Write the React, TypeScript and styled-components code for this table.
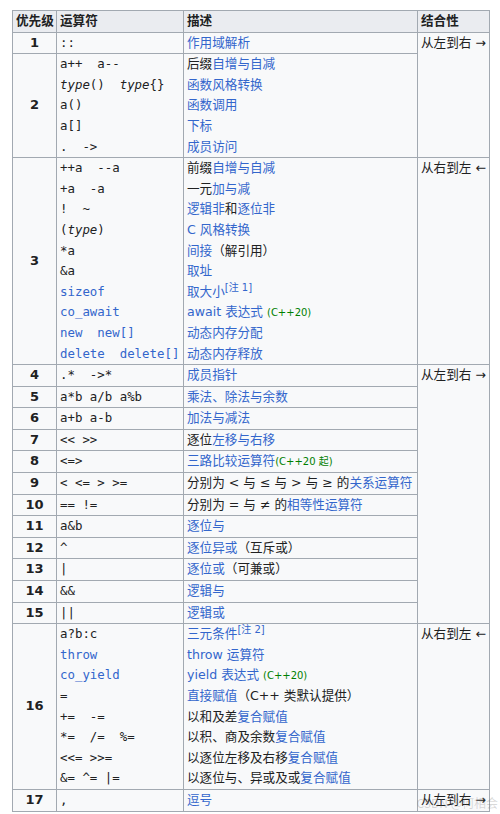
import React from "react";
import styled, { createGlobalStyle } from "styled-components";

const GlobalStyle = createGlobalStyle`
  html, body {
    margin: 0;
    padding: 0;
    background: #ffffff;
  }
  body {
    font-family: "DejaVu Sans", "Noto Sans CJK SC", sans-serif;
    color: #202122;
  }
`;

const Page = styled.div`
  position: relative;
  width: 500px;
  height: 814px;
  padding: 10px 0 0 12px;
  box-sizing: border-box;
  overflow: hidden;
`;

const Table = styled.table`
  border-collapse: collapse;
  table-layout: fixed;
  width: 477px;
  font-size: 12.6px;
  line-height: 20.6px;
  background: #f8f9fa;
  color: #202122;
`;

const HeadCell = styled.th`
  border: 1px solid #a2a9b1;
  background: #eaecf0;
  padding: 0 3px;
  text-align: left;
  font-weight: bold;
  white-space: nowrap;
`;

const Prec = styled.th`
  border: 1px solid #a2a9b1;
  padding: 0 3px;
  text-align: center;
  vertical-align: middle;
  font-weight: bold;
  font-size: 13px;
`;

const Cell = styled.td<{ $top?: boolean }>`
  border: 1px solid #a2a9b1;
  padding: 0 3px;
  vertical-align: ${(p) => (p.$top ? "top" : "middle")};
  white-space: nowrap;
  overflow: hidden;
`;

const Line = styled.div`
  height: 20.6px;
`;

const Code = styled.span<{ $link?: boolean }>`
  font-family: "DejaVu Sans Mono", monospace;
  font-size: 12.4px;
  color: ${(p) => (p.$link ? "#3366cc" : "#202122")};
  white-space: pre;
`;

const Type = styled.i`
  font-family: "DejaVu Sans Mono", monospace;
`;

const Link = styled.span`
  color: #3366cc;
`;

const Note = styled.span`
  color: #008000;
  font-size: 10px;
  line-height: 1;
`;

const Sup = styled.sup`
  color: #3366cc;
  font-size: 10px;
  line-height: 1;
  vertical-align: 5px;
`;

const Assoc = styled.span`
  white-space: nowrap;
`;

const Watermark = styled.span`
  position: absolute;
  right: 2px;
  top: 794px;
  font-size: 12px;
  color: rgba(120, 120, 120, 0.28);
  font-family: "Noto Sans CJK SC", sans-serif;
  pointer-events: none;
`;

const LR = () => <Assoc>从左到右 →</Assoc>;
const RL = () => <Assoc>从右到左 ←</Assoc>;

export default function App() {
  return (
    <Page>
      <GlobalStyle />
      <Table>
        <colgroup>
          <col style={{ width: 44 }} />
          <col style={{ width: 127 }} />
          <col style={{ width: 234 }} />
          <col style={{ width: 72 }} />
        </colgroup>
        <thead>
          <tr>
            <HeadCell>优先级</HeadCell>
            <HeadCell>运算符</HeadCell>
            <HeadCell>描述</HeadCell>
            <HeadCell>结合性</HeadCell>
          </tr>
        </thead>
        <tbody>
          <tr>
            <Prec>1</Prec>
            <Cell><Code>::</Code></Cell>
            <Cell><Link>作用域解析</Link></Cell>
            <Cell $top rowSpan={2}><LR /></Cell>
          </tr>
          <tr>
            <Prec>2</Prec>
            <Cell>
              <Line><Code>a++  a--</Code></Line>
              <Line><Code><Type>type</Type>()  <Type>type</Type>{"{}"}</Code></Line>
              <Line><Code>a()</Code></Line>
              <Line><Code>a[]</Code></Line>
              <Line><Code>.  -&gt;</Code></Line>
            </Cell>
            <Cell>
              <Line>后缀<Link>自增与自减</Link></Line>
              <Line><Link>函数风格转换</Link></Line>
              <Line><Link>函数调用</Link></Line>
              <Line><Link>下标</Link></Line>
              <Line><Link>成员访问</Link></Line>
            </Cell>
          </tr>
          <tr>
            <Prec>3</Prec>
            <Cell>
              <Line><Code>++a  --a</Code></Line>
              <Line><Code>+a  -a</Code></Line>
              <Line><Code>!  ~</Code></Line>
              <Line><Code>(<Type>type</Type>)</Code></Line>
              <Line><Code>*a</Code></Line>
              <Line><Code>&amp;a</Code></Line>
              <Line><Code $link>sizeof</Code></Line>
              <Line><Code $link>co_await</Code></Line>
              <Line><Code $link>new  new[]</Code></Line>
              <Line><Code $link>delete  delete[]</Code></Line>
            </Cell>
            <Cell>
              <Line>前缀<Link>自增与自减</Link></Line>
              <Line>一元<Link>加与减</Link></Line>
              <Line><Link>逻辑非</Link>和<Link>逐位非</Link></Line>
              <Line><Link>C 风格转换</Link></Line>
              <Line><Link>间接</Link>（解引用）</Line>
              <Line><Link>取址</Link></Line>
              <Line><Link>取大小</Link><Sup>[注 1]</Sup></Line>
              <Line><Link>await 表达式</Link> <Note>(C++20)</Note></Line>
              <Line><Link>动态内存分配</Link></Line>
              <Line><Link>动态内存释放</Link></Line>
            </Cell>
            <Cell $top><RL /></Cell>
          </tr>
          <tr>
            <Prec>4</Prec>
            <Cell><Code>.*  -&gt;*</Code></Cell>
            <Cell><Link>成员指针</Link></Cell>
            <Cell $top rowSpan={12}><LR /></Cell>
          </tr>
          <tr>
            <Prec>5</Prec>
            <Cell><Code>a*b a/b a%b</Code></Cell>
            <Cell><Link>乘法、除法与余数</Link></Cell>
          </tr>
          <tr>
            <Prec>6</Prec>
            <Cell><Code>a+b a-b</Code></Cell>
            <Cell><Link>加法与减法</Link></Cell>
          </tr>
          <tr>
            <Prec>7</Prec>
            <Cell><Code>&lt;&lt; &gt;&gt;</Code></Cell>
            <Cell>逐位<Link>左移与右移</Link></Cell>
          </tr>
          <tr>
            <Prec>8</Prec>
            <Cell><Code>&lt;=&gt;</Code></Cell>
            <Cell><Link>三路比较运算符</Link><Note>(C++20 起)</Note></Cell>
          </tr>
          <tr>
            <Prec>9</Prec>
            <Cell><Code>&lt; &lt;= &gt; &gt;=</Code></Cell>
            <Cell>分别为 &lt; 与 ≤ 与 &gt; 与 ≥ 的<Link>关系运算符</Link></Cell>
          </tr>
          <tr>
            <Prec>10</Prec>
            <Cell><Code>== !=</Code></Cell>
            <Cell>分别为 = 与 ≠ 的<Link>相等性运算符</Link></Cell>
          </tr>
          <tr>
            <Prec>11</Prec>
            <Cell><Code>a&amp;b</Code></Cell>
            <Cell><Link>逐位与</Link></Cell>
          </tr>
          <tr>
            <Prec>12</Prec>
            <Cell><Code>^</Code></Cell>
            <Cell><Link>逐位异或</Link>（互斥或）</Cell>
          </tr>
          <tr>
            <Prec>13</Prec>
            <Cell><Code>|</Code></Cell>
            <Cell><Link>逐位或</Link>（可兼或）</Cell>
          </tr>
          <tr>
            <Prec>14</Prec>
            <Cell><Code>&amp;&amp;</Code></Cell>
            <Cell><Link>逻辑与</Link></Cell>
          </tr>
          <tr>
            <Prec>15</Prec>
            <Cell><Code>||</Code></Cell>
            <Cell><Link>逻辑或</Link></Cell>
          </tr>
          <tr>
            <Prec>16</Prec>
            <Cell>
              <Line><Code>a?b:c</Code></Line>
              <Line><Code $link>throw</Code></Line>
              <Line><Code $link>co_yield</Code></Line>
              <Line><Code>=</Code></Line>
              <Line><Code>+=  -=</Code></Line>
              <Line><Code>*=  /=  %=</Code></Line>
              <Line><Code>&lt;&lt;= &gt;&gt;=</Code></Line>
              <Line><Code>&amp;= ^= |=</Code></Line>
            </Cell>
            <Cell>
              <Line><Link>三元条件</Link><Sup>[注 2]</Sup></Line>
              <Line><Link>throw 运算符</Link></Line>
              <Line><Link>yield 表达式</Link> <Note>(C++20)</Note></Line>
              <Line><Link>直接赋值</Link>（C++ 类默认提供）</Line>
              <Line>以和及差<Link>复合赋值</Link></Line>
              <Line>以积、商及余数<Link>复合赋值</Link></Line>
              <Line>以逐位左移及右移<Link>复合赋值</Link></Line>
              <Line>以逐位与、异或及或<Link>复合赋值</Link></Line>
            </Cell>
            <Cell $top><RL /></Cell>
          </tr>
          <tr>
            <Prec>17</Prec>
            <Cell><Code>,</Code></Cell>
            <Cell><Link>逗号</Link></Cell>
            <Cell $top><LR /></Cell>
          </tr>
        </tbody>
      </Table>
      <Watermark>CSDN @何相会</Watermark>
    </Page>
  );
}
